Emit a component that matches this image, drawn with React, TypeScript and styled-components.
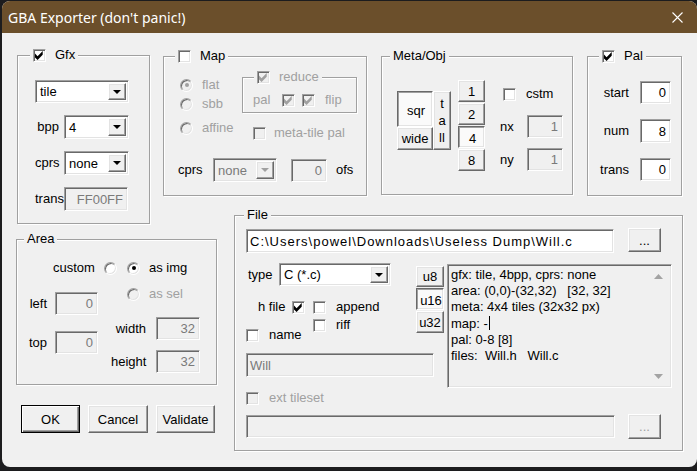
import React from 'react';
import styled, { createGlobalStyle, css } from 'styled-components';

const Global = createGlobalStyle`
  html, body { margin: 0; padding: 0; background: #1c1c1e; }
  body { font-family: "Liberation Sans", Arial, sans-serif; font-size: 13px; color: #000; }
  * { box-sizing: border-box; }
  #root { width: 697px; height: 471px; overflow: hidden; }
`;

const sunken = css`
  border: 1px solid;
  border-color: #a0a0a0 #ffffff #ffffff #a0a0a0;
  box-shadow: inset 1px 1px 0 #696969, inset -1px -1px 0 #e3e3e3;
`;

const raised = css`
  border: 1px solid;
  border-color: #ffffff #696969 #696969 #ffffff;
  box-shadow: inset -1px -1px 0 #a0a0a0, inset 1px 1px 0 #e3e3e3;
`;

const Win = styled.div`
  margin: 1px 0 0 2px;
  width: 695px;
  height: 466px;
  background: #f0f0f0;
  border-radius: 8px;
  overflow: hidden;
  display: flex;
  flex-direction: column;
`;

const TitleBar = styled.div`
  height: 32px;
  flex: none;
  background: #6b4f2b;
  display: flex;
  align-items: center;
  justify-content: space-between;
  padding-left: 6px;
`;

const Title = styled.span`
  font-family: "Noto Sans", "Open Sans", sans-serif;
  font-size: 14px;
  color: #ffffff;
`;

const CloseBtn = styled.span`
  width: 40px;
  height: 32px;
  display: flex;
  align-items: center;
  justify-content: center;
`;

const Body = styled.div`
  display: grid;
  padding: 22px 0 0 14px;
  grid-template-columns: 134px 13px 54px 17px 133px 14px 192px 14px 96px;
  grid-template-rows: 141px 19px 9px 15px 146px 20px 28px 18px;
`;

const Group = styled.div`
  position: relative;
  border: 1px solid #a0a0a0;
  box-shadow: inset 1px 1px 0 #ffffff, 1px 1px 0 #ffffff;
`;

const GfxGroup = styled(Group)`
  grid-column: 1 / 2;
  grid-row: 1 / 4;
  margin-left: 1px;
  padding: 24px 0 0 17px;
`;

const MapGroup = styled(Group)`
  grid-column: 3 / 6;
  grid-row: 1 / 2;
  margin-top: 1px;
  padding: 20px 0 0 14px;
`;

const MetaGroup = styled(Group)`
  grid-column: 7 / 8;
  grid-row: 1 / 2;
  margin-top: 1px;
  margin-bottom: 1px;
  display: flex;
  align-items: flex-start;
  padding: 23px 0 0 15px;
`;

const PalGroup = styled(Group)`
  grid-column: 9 / 10;
  grid-row: 1 / 2;
  margin-top: 1px;
  margin-right: 1px;
  padding-top: 24px;
`;

const AreaGroup = styled(Group)`
  grid-column: 1 / 4;
  grid-row: 5 / 6;
  padding-top: 20px;
`;

const FileGroup = styled(Group)`
  grid-column: 5 / 10;
  grid-row: 3 / 9;
  padding: 12px 0 0 11px;
`;

const ButtonRow = styled.div`
  grid-column: 1 / 4;
  grid-row: 7 / 8;
  display: flex;
  gap: 8px;
  padding-left: 5px;
`;

const Legend = styled.div<{ $left: number }>`
  position: absolute;
  top: -9px;
  left: ${p => p.$left}px;
  height: 16px;
  padding: 0 3px;
  background: #f0f0f0;
  display: flex;
  align-items: center;
  gap: 9px;
  line-height: 16px;
  white-space: nowrap;
`;

const Text = styled.span<{ $disabled?: boolean; $w?: number }>`
  color: ${p => (p.$disabled ? '#a0a0a0' : '#000')};
  line-height: 16px;
  white-space: nowrap;
  ${p => (p.$w ? `width: ${p.$w}px; flex: none;` : '')}
`;

const Label = styled.span<{ $disabled?: boolean }>`
  text-align: right;
  align-self: center;
  line-height: 16px;
  white-space: nowrap;
  color: ${p => (p.$disabled ? '#a0a0a0' : '#000')};
`;

const LeftLabel = styled(Label)`
  text-align: left;
`;

const CheckBoxBox = styled.span<{ $disabled?: boolean }>`
  width: 13px;
  height: 13px;
  flex: none;
  display: inline-flex;
  align-items: center;
  justify-content: center;
  background: ${p => (p.$disabled ? '#f0f0f0' : '#ffffff')};
  ${sunken}
`;

function Check({ checked, disabled }: { checked?: boolean; disabled?: boolean }) {
  return (
    <CheckBoxBox $disabled={disabled}>
      {checked && (
        <svg width="9" height="9" viewBox="0 0 7 7">
          <polygon points="0,2 2,4 6,0 6,3 2,7 0,5" fill={disabled ? '#a0a0a0' : '#000'} />
        </svg>
      )}
    </CheckBoxBox>
  );
}

const RadioCircle = styled.span<{ $disabled?: boolean }>`
  width: 13px;
  height: 13px;
  flex: none;
  border-radius: 50%;
  display: inline-flex;
  align-items: center;
  justify-content: center;
  background: ${p => (p.$disabled ? '#f0f0f0' : '#ffffff')};
  ${sunken}
`;

const RadioDot = styled.span<{ $disabled?: boolean }>`
  width: 4px;
  height: 4px;
  border-radius: 50%;
  background: ${p => (p.$disabled ? '#a0a0a0' : '#000')};
`;

function Radio({ checked, disabled }: { checked?: boolean; disabled?: boolean }) {
  return <RadioCircle $disabled={disabled}>{checked && <RadioDot $disabled={disabled} />}</RadioCircle>;
}

const Edit = styled.div<{ $w: number; $h?: number; $disabled?: boolean; $right?: boolean; $spacing?: number }>`
  width: ${p => p.$w}px;
  height: ${p => p.$h ?? 23}px;
  flex: none;
  ${sunken}
  background: ${p => (p.$disabled ? '#f0f0f0' : '#ffffff')};
  color: ${p => (p.$disabled ? '#7a7a7a' : '#000')};
  display: flex;
  align-items: center;
  justify-content: ${p => (p.$right ? 'flex-end' : 'flex-start')};
  padding: 0 4px 0 3px;
  white-space: nowrap;
  overflow: hidden;
  letter-spacing: ${p => p.$spacing ?? 0}px;
`;

const ComboBox = styled.div<{ $w: number; $h?: number; $disabled?: boolean }>`
  width: ${p => p.$w}px;
  height: ${p => p.$h ?? 24}px;
  flex: none;
  ${sunken}
  background: ${p => (p.$disabled ? '#f0f0f0' : '#ffffff')};
  color: ${p => (p.$disabled ? '#7a7a7a' : '#000')};
  display: flex;
  align-items: stretch;
  padding: 2px;
`;

const ComboValue = styled.span`
  flex: 1;
  display: flex;
  align-items: center;
  padding-left: 2px;
  white-space: nowrap;
`;

const ComboButton = styled.span`
  width: 18px;
  flex: none;
  background: #f0f0f0;
  display: flex;
  align-items: center;
  justify-content: center;
  ${raised}
`;

function Combo({ w, h, value, disabled }: { w: number; h?: number; value: string; disabled?: boolean }) {
  return (
    <ComboBox $w={w} $h={h} $disabled={disabled}>
      <ComboValue>{value}</ComboValue>
      <ComboButton>
        <svg width="8" height="4" viewBox="0 0 8 4">
          <polygon points="0,0 8,0 4,4" fill={disabled ? '#a0a0a0' : '#000'} />
        </svg>
      </ComboButton>
    </ComboBox>
  );
}

const Btn = styled.div<{ $w: number; $h: number; $pressed?: boolean; $default?: boolean; $disabled?: boolean }>`
  width: ${p => p.$w}px;
  height: ${p => p.$h}px;
  flex: none;
  display: flex;
  align-items: center;
  justify-content: center;
  color: ${p => (p.$disabled ? '#a0a0a0' : '#000')};
  background: ${p => (p.$pressed ? '#fafafa' : '#f0f0f0')};
  white-space: nowrap;
  ${p =>
    p.$pressed
      ? css`
          border: 1px solid;
          border-color: #696969 #ffffff #ffffff #696969;
          box-shadow: inset 1px 1px 0 #a0a0a0, inset -1px -1px 0 #e3e3e3;
          padding-top: 2px;
          padding-left: 2px;
        `
      : p.$default
      ? css`
          border: 1px solid #000;
          box-shadow: inset 1px 1px 0 #ffffff, inset -1px -1px 0 #696969, inset -2px -2px 0 #a0a0a0;
        `
      : raised}
`;

const FormGrid = styled.div<{ $cols: string; $colGap: number; $rowGap: number }>`
  display: grid;
  grid-template-columns: ${p => p.$cols};
  column-gap: ${p => p.$colGap}px;
  row-gap: ${p => p.$rowGap}px;
  align-items: center;
`;

/* ---------- Gfx ---------- */
const GfxGrid = styled(FormGrid)`
  margin-top: 12px;
`;

/* ---------- Map ---------- */
const MapTop = styled.div`
  display: flex;
  align-items: flex-start;
`;

const RadioCol = styled.div`
  width: 64px;
  flex: none;
  padding-left: 2px;
  display: flex;
  flex-direction: column;
`;

const OptionRow = styled.div<{ $gap?: number; $mt?: number }>`
  display: flex;
  align-items: center;
  height: 16px;
  gap: ${p => p.$gap ?? 9}px;
  margin-top: ${p => p.$mt ?? 0}px;
`;

const MapRight = styled.div`
  display: flex;
  flex-direction: column;
`;

const ReduceBox = styled(Group)`
  width: 115px;
  height: 36px;
  padding: 14px 0 0 10px;
`;

const ReduceRow = styled.div`
  display: flex;
  align-items: center;
  height: 16px;
  gap: 7px;
`;

const FlipText = styled(Text)`
  margin-left: 3px;
`;

const MetaTileRow = styled(OptionRow)`
  margin-top: 12px;
  padding-left: 11px;
  gap: 8px;
`;

const CprsRow = styled.div`
  display: flex;
  align-items: center;
  margin-top: 17px;
`;

const OfsField = styled.div`
  margin-left: 14px;
  margin-right: 9px;
`;

/* ---------- Meta ---------- */
const ShapeCluster = styled.div`
  margin-top: 11px;
  display: grid;
  grid-template-columns: 36px 18px;
  grid-template-rows: 36px 23px;
`;

const TallBtn = styled(Btn)`
  grid-column: 2;
  grid-row: 1 / 3;
  flex-direction: column;
  text-align: center;
`;

const TallLetter = styled.span`
  display: block;
  height: 17px;
  line-height: 17px;
`;

const SizeCol = styled.div`
  margin-left: 7px;
  display: flex;
  flex-direction: column;
  gap: 1px;
`;

const ObjRight = styled.div`
  margin-left: 15px;
  display: flex;
  flex-direction: column;
`;

const CstmRow = styled(OptionRow)`
  margin-top: 6px;
  padding-left: 3px;
  gap: 10px;
`;

const NxGrid = styled(FormGrid)`
  margin-top: 13px;
`;

/* ---------- Area ---------- */
const CustomRow = styled(OptionRow)`
  padding-left: 36px;
  gap: 0;
`;

const AsImg = styled.div`
  display: flex;
  align-items: center;
  gap: 9px;
  margin-left: 10px;
`;

const AreaBody = styled.div`
  display: flex;
  align-items: flex-start;
  padding-left: 6px;
`;

const AreaLeft = styled(FormGrid)`
  margin-top: 16px;
`;

const AreaRight = styled.div`
  margin-left: 13px;
  display: flex;
  flex-direction: column;
`;

const AsSelRow = styled(OptionRow)`
  margin-top: 10px;
  padding-left: 16px;
`;

const AreaRightGrid = styled(FormGrid)`
  margin-top: 15px;
`;

/* ---------- File ---------- */
const PathRow = styled.div<{ $gap: number }>`
  display: flex;
  align-items: flex-start;
  gap: ${p => p.$gap}px;
`;

const PathField = styled.div`
  margin-top: 1px;
`;

const MidRow = styled.div`
  display: flex;
  align-items: flex-start;
  margin-top: 10px;
`;

const LeftPart = styled.div`
  width: 188px;
  flex: none;
  display: flex;
  flex-direction: column;
`;

const UpperRow = styled.div`
  display: flex;
  align-items: flex-start;
`;

const OptionsCol = styled.div`
  width: 158px;
  flex: none;
  display: flex;
  flex-direction: column;
`;

const TypeRow = styled.div`
  display: flex;
  align-items: center;
  height: 23px;
`;

const TypeLabel = styled.span`
  width: 33px;
  padding-left: 2px;
  flex: none;
`;

const HFileRow = styled(OptionRow)`
  margin-top: 14px;
  gap: 0;
  height: 14px;
`;

const HFileLabel = styled.span`
  width: 46px;
  padding-left: 12px;
  flex: none;
  line-height: 16px;
`;

const AppendItem = styled.div`
  display: flex;
  align-items: center;
  gap: 10px;
  margin-left: 8px;
`;

const NameRiffRow = styled.div`
  display: flex;
  align-items: flex-start;
  margin-top: 4px;
`;

const NameItem = styled(OptionRow)`
  width: 67px;
  height: 14px;
  margin-top: 10px;
  gap: 10px;
`;

const RiffItem = styled(OptionRow)`
  height: 14px;
  gap: 10px;
`;

const UCol = styled.div`
  margin-left: 12px;
  margin-top: 3px;
  display: flex;
  flex-direction: column;
  gap: 1px;
`;

const WillField = styled.div`
  margin-top: 11px;
`;

const InfoBox = styled.div`
  width: 225px;
  height: 124px;
  margin-left: 13px;
  margin-top: 1px;
  flex: none;
  ${sunken}
  background: #f0f0f0;
  display: flex;
  padding: 2px;
`;

const InfoText = styled.div`
  flex: 1;
  padding: 0 0 0 1px;
  line-height: 16.2px;
  white-space: pre;
`;

const Caret = styled.span`
  display: inline-block;
  width: 1px;
  height: 14px;
  background: #000;
  vertical-align: -2px;
  margin-left: 1px;
`;

const ScrollBar = styled.div`
  width: 21px;
  flex: none;
  display: flex;
  flex-direction: column;
  justify-content: space-between;
  align-items: center;
  padding: 7px 0 6px;
`;

const ExtRow = styled(OptionRow)`
  margin-top: 3px;
  height: 14px;
  gap: 10px;
`;

const ExtPathRow = styled(PathRow)`
  margin-top: 9px;
`;

export default function App() {
  return (
    <>
      <Global />
      <Win>
        <TitleBar>
          <Title>GBA Exporter (don&apos;t panic!)</Title>
          <CloseBtn>
            <svg width="11" height="11" viewBox="0 0 11 11">
              <path d="M0.5 0.5 L10.5 10.5 M10.5 0.5 L0.5 10.5" stroke="#ffffff" strokeWidth="1.1" />
            </svg>
          </CloseBtn>
        </TitleBar>
        <Body>
          <GfxGroup>
            <Legend $left={12}>
              <Check checked />
              <Text>Gfx</Text>
            </Legend>
            <Combo w={94} h={23} value="tile" />
            <GfxGrid $cols="24px 65px" $colGap={5} $rowGap={12}>
              <Label>bpp</Label>
              <Combo w={65} value="4" />
              <Label>cprs</Label>
              <Combo w={65} value="none" />
              <Label>trans</Label>
              <Edit $w={64} $h={24} $disabled $right>
                FF00FF
              </Edit>
            </GfxGrid>
          </GfxGroup>

          <MapGroup>
            <Legend $left={11}>
              <Check />
              <Text>Map</Text>
            </Legend>
            <MapTop>
              <RadioCol>
                <OptionRow>
                  <Radio checked disabled />
                  <Text $disabled>flat</Text>
                </OptionRow>
                <OptionRow $mt={3}>
                  <Radio disabled />
                  <Text $disabled>sbb</Text>
                </OptionRow>
                <OptionRow $mt={8}>
                  <Radio disabled />
                  <Text $disabled>affine</Text>
                </OptionRow>
              </RadioCol>
              <MapRight>
                <ReduceBox>
                  <Legend $left={11}>
                    <Check checked disabled />
                    <Text $disabled>reduce</Text>
                  </Legend>
                  <ReduceRow>
                    <Text $disabled $w={22}>
                      pal
                    </Text>
                    <Check checked disabled />
                    <Check checked disabled />
                    <FlipText $disabled>flip</FlipText>
                  </ReduceRow>
                </ReduceBox>
                <MetaTileRow>
                  <Check disabled />
                  <Text $disabled>meta-tile pal</Text>
                </MetaTileRow>
              </MapRight>
            </MapTop>
            <CprsRow>
              <Text $w={35}>cprs</Text>
              <Combo w={64} value="none" disabled />
              <OfsField>
                <Edit $w={36} $disabled $right>
                  0
                </Edit>
              </OfsField>
              <Text>ofs</Text>
            </CprsRow>
          </MapGroup>

          <MetaGroup>
            <Legend $left={8}>
              <Text>Meta/Obj</Text>
            </Legend>
            <ShapeCluster>
              <Btn $w={36} $h={36} $pressed>
                sqr
              </Btn>
              <Btn $w={36} $h={23}>
                wide
              </Btn>
              <TallBtn $w={18} $h={59}>
                <TallLetter>t</TallLetter>
                <TallLetter>a</TallLetter>
                <TallLetter>ll</TallLetter>
              </TallBtn>
            </ShapeCluster>
            <SizeCol>
              <Btn $w={27} $h={22}>1</Btn>
              <Btn $w={27} $h={22}>2</Btn>
              <Btn $w={27} $h={22} $pressed>
                4
              </Btn>
              <Btn $w={27} $h={22}>8</Btn>
            </SizeCol>
            <ObjRight>
              <CstmRow>
                <Check />
                <Text>cstm</Text>
              </CstmRow>
              <NxGrid $cols="27px 36px" $colGap={0} $rowGap={10}>
                <LeftLabel>nx</LeftLabel>
                <Edit $w={36} $disabled $right>
                  1
                </Edit>
                <LeftLabel>ny</LeftLabel>
                <Edit $w={36} $disabled $right>
                  1
                </Edit>
              </NxGrid>
            </ObjRight>
          </MetaGroup>

          <PalGroup>
            <Legend $left={11}>
              <Check checked />
              <Text>Pal</Text>
            </Legend>
            <FormGrid $cols="41px 31px" $colGap={11} $rowGap={15}>
              <Label>start</Label>
              <Edit $w={31} $right>
                0
              </Edit>
              <Label>num</Label>
              <Edit $w={31} $h={24} $right>
                8
              </Edit>
              <Label>trans</Label>
              <Edit $w={31} $right>
                0
              </Edit>
            </FormGrid>
          </PalGroup>

          <AreaGroup>
            <Legend $left={7}>
              <Text>Area</Text>
            </Legend>
            <CustomRow>
              <Text $w={51}>custom</Text>
              <Radio />
              <AsImg>
                <Radio checked />
                <Text>as img</Text>
              </AsImg>
            </CustomRow>
            <AreaBody>
              <AreaLeft $cols="24px 43px" $colGap={8} $rowGap={16}>
                <Label>left</Label>
                <Edit $w={43} $disabled $right>
                  0
                </Edit>
                <Label>top</Label>
                <Edit $w={43} $disabled $right>
                  0
                </Edit>
              </AreaLeft>
              <AreaRight>
                <AsSelRow>
                  <Radio disabled />
                  <Text $disabled>as sel</Text>
                </AsSelRow>
                <AreaRightGrid $cols="35px 44px" $colGap={10} $rowGap={10}>
                  <Label>width</Label>
                  <Edit $w={44} $disabled $right>
                    32
                  </Edit>
                  <Label>height</Label>
                  <Edit $w={44} $disabled $right>
                    32
                  </Edit>
                </AreaRightGrid>
              </AreaRight>
            </AreaBody>
          </AreaGroup>

          <ButtonRow>
            <Btn $w={59} $h={28} $default>
              OK
            </Btn>
            <Btn $w={60} $h={28}>
              Cancel
            </Btn>
            <Btn $w={59} $h={28}>
              Validate
            </Btn>
          </ButtonRow>

          <FileGroup>
            <Legend $left={9}>
              <Text>File</Text>
            </Legend>
            <PathRow $gap={14}>
              <PathField>
                <Edit $w={368} $h={24} $spacing={1}>
                  C:\Users\powel\Downloads\Useless Dump\Will.c
                </Edit>
              </PathField>
              <Btn $w={33} $h={24}>
                ...
              </Btn>
            </PathRow>
            <MidRow>
              <LeftPart>
                <UpperRow>
                  <OptionsCol>
                    <TypeRow>
                      <TypeLabel>type</TypeLabel>
                      <Combo w={112} h={23} value="C (*.c)" />
                    </TypeRow>
                    <HFileRow>
                      <HFileLabel>h file</HFileLabel>
                      <Check checked />
                      <AppendItem>
                        <Check />
                        <Text>append</Text>
                      </AppendItem>
                    </HFileRow>
                    <NameRiffRow>
                      <NameItem>
                        <Check />
                        <Text>name</Text>
                      </NameItem>
                      <RiffItem>
                        <Check />
                        <Text>riff</Text>
                      </RiffItem>
                    </NameRiffRow>
                  </OptionsCol>
                  <UCol>
                    <Btn $w={28} $h={21}>u8</Btn>
                    <Btn $w={28} $h={22} $pressed>
                      u16
                    </Btn>
                    <Btn $w={28} $h={22}>u32</Btn>
                  </UCol>
                </UpperRow>
                <WillField>
                  <Edit $w={188} $h={24} $disabled>
                    Will
                  </Edit>
                </WillField>
              </LeftPart>
              <InfoBox>
                <InfoText>
                  {'gfx: tile, 4bpp, cprs: none\narea: (0,0)-(32,32)   [32, 32]\nmeta: 4x4 tiles (32x32 px)\nmap: -'}
                  <Caret />
                  {'\npal: 0-8 [8]\nfiles:  Will.h   Will.c'}
                </InfoText>
                <ScrollBar>
                  <svg width="9" height="5" viewBox="0 0 9 5">
                    <polygon points="0,5 9,5 4.5,0" fill="#a3a3a3" />
                  </svg>
                  <svg width="9" height="5" viewBox="0 0 9 5">
                    <polygon points="0,0 9,0 4.5,5" fill="#a3a3a3" />
                  </svg>
                </ScrollBar>
              </InfoBox>
            </MidRow>
            <ExtRow>
              <Check disabled />
              <Text $disabled>ext tileset</Text>
            </ExtRow>
            <ExtPathRow $gap={13}>
              <PathField>
                <Edit $w={369} $h={23} $disabled />
              </PathField>
              <Btn $w={33} $h={25} $disabled>
                ...
              </Btn>
            </ExtPathRow>
          </FileGroup>
        </Body>
      </Win>
    </>
  );
}
